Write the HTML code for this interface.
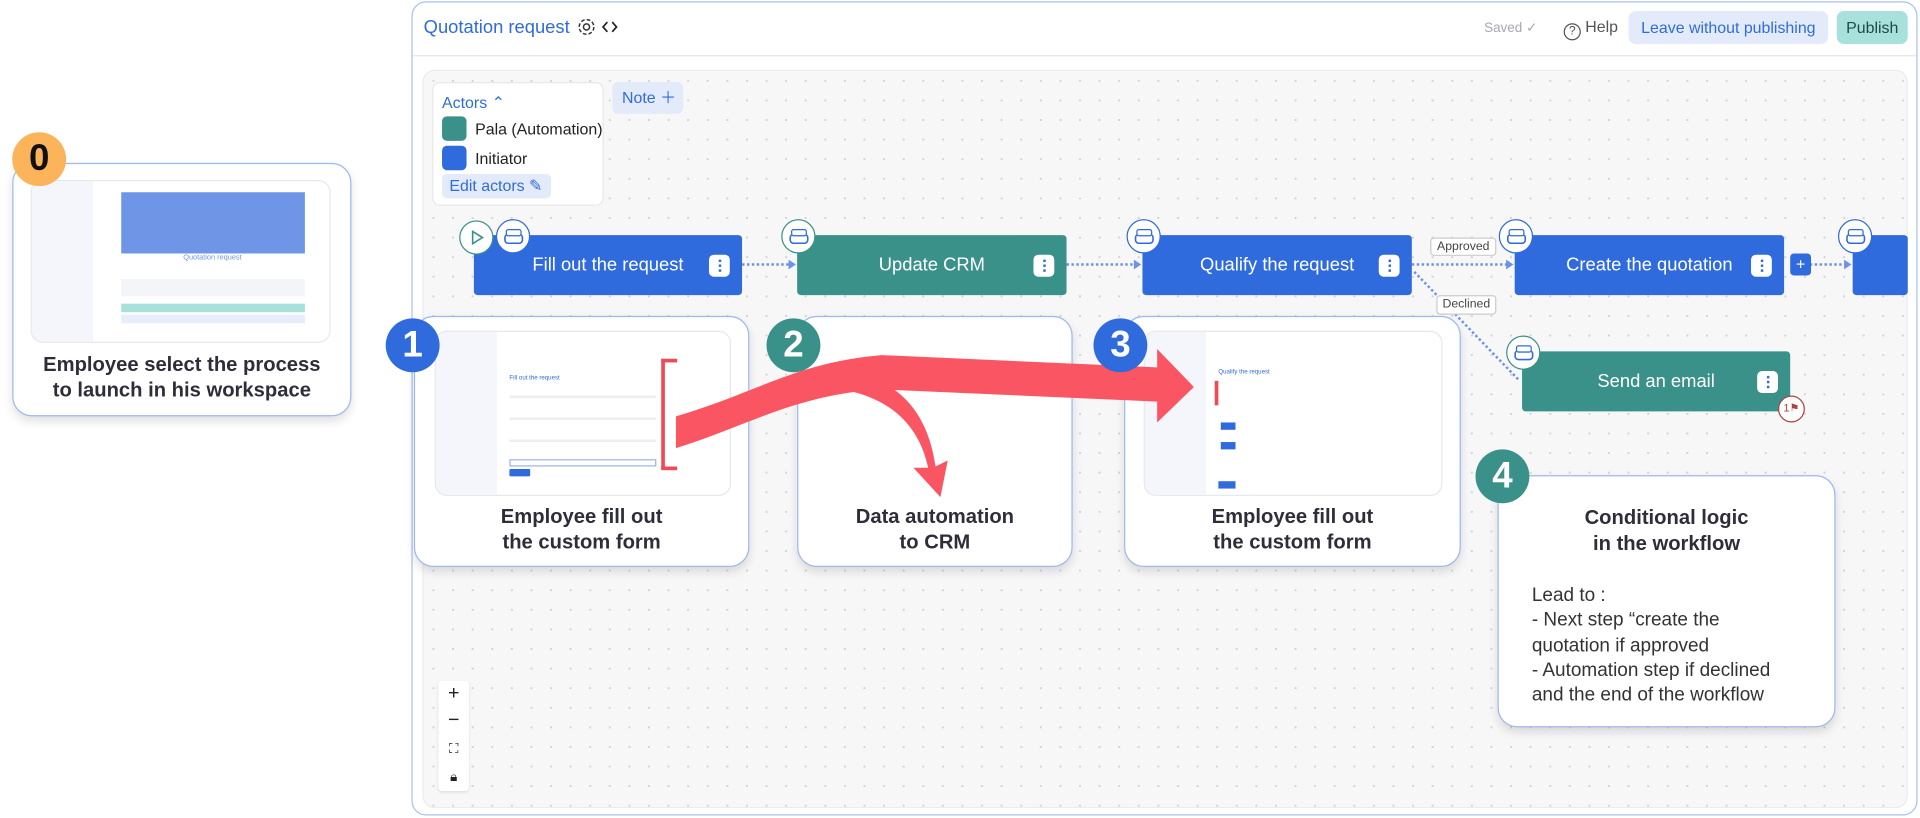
<!DOCTYPE html>
<html><head><meta charset="utf-8"><style>
*{box-sizing:border-box;margin:0;padding:0}
html,body{width:1920px;height:818px;overflow:hidden;background:#fff;font-family:"Liberation Sans",sans-serif}
#s{position:absolute;left:0;top:0;width:1568px;height:668px;transform:scale(1.22449);transform-origin:0 0}
.a{position:absolute}
.card{position:absolute;background:#fff;border:1.5px solid #9db8ef;border-radius:16px;box-shadow:0 4px 8px rgba(0,0,0,.12)}
.badge{position:absolute;width:44px;height:44px;border-radius:50%;color:#fff;font-weight:bold;font-size:30px;text-align:center;line-height:44px}
.ct{position:absolute;left:0;right:0;text-align:center;font-weight:bold;font-size:16.5px;color:#2e2e3a;line-height:21px}
.node{position:absolute;height:49px;border-radius:3px;color:#fff;font-size:15px;line-height:49px;text-align:center}
.kb{position:absolute;right:10px;top:16px;width:17px;height:18px;background:#fff;border-radius:4px}
.kb:before{content:"";position:absolute;left:7.5px;top:4px;width:2px;height:2px;background:#2f6bdc;box-shadow:0 4px #2f6bdc,0 8px #2f6bdc}
.ic{position:absolute;width:28px;height:28px;border-radius:50%;background:#fff;border:1.5px solid #2f6bdc}
.ic:before{content:"";position:absolute;left:7px;top:7px;width:11px;height:4px;border:1.3px solid #2f6bdc;border-radius:2px;box-shadow:0 5px 0 -0px #fff,0 5px 0 1.3px #2f6bdc}
.teal{background:#3a918a}.blue{background:#2f6bdc}
.shot{position:absolute;background:#fff;border:1px solid #e6e8ee;border-radius:10px;overflow:hidden}
.side{position:absolute;left:0;top:0;bottom:0;width:50px;background:#f4f6fb}
.ln{position:absolute;height:2px;background:#d6d9e2}
</style></head><body><div id="s">

<div class="card" style="left:10px;top:133px;width:277px;height:207px"></div>
<div class="shot" style="left:25px;top:147px;width:245px;height:133px">
 <div class="side" style="width:50px"></div>
 <div class="a" style="left:73px;top:9px;width:150px;height:50px;background:#6f95e6"></div>
 <div class="a" style="left:50px;top:60px;width:195px;text-align:center;color:#6f95e6;font-size:6px">Quotation request</div>
 <div class="a" style="left:73px;top:80px;width:150px;height:14px;background:#f4f5f8"></div>
 <div class="a" style="left:73px;top:100px;width:150px;height:7px;background:#a8e0dc"></div>
 <div class="a" style="left:73px;top:109px;width:150px;height:7px;background:#e6edfb"></div>
</div>
<div class="badge" style="left:10px;top:108px;background:#fbb45a;color:#111">0</div>
<div class="ct" style="left:10px;width:277px;top:288px">Employee select the process<br>to launch in his workspace</div>

<div class="a" style="left:336px;top:1px;width:1230px;height:665px;border:1.5px solid #a9c1f1;border-radius:12px;background:#fff"></div>
<div class="a" style="left:337px;top:45px;width:1228px;height:1px;background:#e4e6eb"></div>
<div class="a" style="left:345px;top:57px;width:1213px;height:603px;border-radius:10px;border:1px solid #ececec;background-color:#f7f7f8;background-image:radial-gradient(#cfd2d8 0.8px,transparent 1px);background-size:16px 16px"></div>
<div class="a" style="left:346px;top:14px;color:#2f6bdc;font-size:15px">Quotation request</div>
<svg class="a" style="left:471px;top:14px" width="36" height="16" viewBox="0 0 36 16"><circle cx="8" cy="8" r="2.5" fill="none" stroke="#333" stroke-width="1.2"/><circle cx="8" cy="8" r="6" fill="none" stroke="#333" stroke-width="1.2" stroke-dasharray="3 1.7"/><path d="M25 4l-3.5 4 3.5 4M29 4l3.5 4-3.5 4" fill="none" stroke="#222" stroke-width="1.4"/></svg>
<div class="a" style="left:1212px;top:16px;color:#a5a8b0;font-size:11px">Saved ✓</div>
<div class="a" style="left:1277px;top:14px;color:#555;font-size:13px"><span style="display:inline-block;width:14px;height:14px;border:1.2px solid #555;border-radius:50%;font-size:10px;text-align:center;line-height:12px;vertical-align:-2px">?</span> Help</div>
<div class="a" style="left:1330px;top:9px;width:163px;height:27px;background:#e3ebfb;border-radius:6px;color:#2f6bdc;font-size:13px;line-height:27px;text-align:center">Leave without publishing</div>
<div class="a" style="left:1500px;top:9px;width:58px;height:27px;background:#a8e0dc;border-radius:6px;color:#1c4b47;font-size:13px;line-height:27px;text-align:center">Publish</div>

<div class="a" style="left:353px;top:67px;width:140px;height:101px;background:#fff;border:1px solid #e8e8ea;border-radius:6px"></div>
<div class="a" style="left:361px;top:76px;color:#2f6bdc;font-size:13px">Actors ⌃</div>
<div class="a teal" style="left:361px;top:95px;width:20px;height:20px;border-radius:4px"></div>
<div class="a" style="left:388px;top:98px;font-size:13px;color:#222">Pala (Automation)</div>
<div class="a blue" style="left:361px;top:119px;width:20px;height:20px;border-radius:4px"></div>
<div class="a" style="left:388px;top:122px;font-size:13px;color:#222">Initiator</div>
<div class="a" style="left:361px;top:142px;width:89px;height:20px;background:#e3ebfb;border-radius:4px;color:#2f6bdc;font-size:13px;line-height:20px;padding-left:6px">Edit actors ✎</div>
<div class="a" style="left:500px;top:67px;width:58px;height:26px;background:#e3ebfb;border-radius:5px;color:#2f6bdc;font-size:13px;line-height:26px;padding-left:8px">Note ＋</div>

<svg class="a" style="left:0;top:0" width="1568" height="668"><g stroke="#6d93e5" stroke-width="2" stroke-dasharray="2 2" fill="none">
<path d="M606 216H648"/><path d="M871 216H930"/><path d="M1153 216H1234"/><path d="M1478 216H1510"/><path d="M1155 222L1241 311"/></g>
<g fill="#6d93e5"><path d="M644 212l6 4-6 4z"/><path d="M926 212l6 4-6 4z"/><path d="M1230 212l6 4-6 4z"/><path d="M1506 212l6 4-6 4z"/></g></svg>
<div class="a" style="left:1168px;top:194px;width:54px;height:15px;background:#fff;border:1px solid #ccc;border-radius:3px;font-size:10px;color:#444;text-align:center;line-height:13px">Approved</div>
<div class="a" style="left:1173px;top:241px;width:49px;height:16px;background:#fff;border:1px solid #ccc;border-radius:3px;font-size:10px;color:#444;text-align:center;line-height:14px">Declined</div>

<div class="node blue" style="left:387px;top:192px;width:219px">Fill out the request<div class="kb"></div></div>
<div class="node teal" style="left:651px;top:192px;width:220px">Update CRM<div class="kb"></div></div>
<div class="node blue" style="left:933px;top:192px;width:220px">Qualify the request<div class="kb"></div></div>
<div class="node blue" style="left:1237px;top:192px;width:220px">Create the quotation<div class="kb"></div></div>
<div class="node blue" style="left:1513px;top:192px;width:45px"></div>
<div class="node teal" style="left:1243px;top:287px;width:219px">Send an email<div class="kb"></div></div>
<div class="a blue" style="left:1462px;top:207px;width:17px;height:18px;border-radius:3px;color:#fff;font-size:13px;text-align:center;line-height:18px">+</div>
<div class="a" style="left:1452px;top:323px;width:22px;height:22px;border-radius:50%;background:#fff;border:1.5px solid #b0413e;color:#b0413e;font-size:9px;text-align:center;line-height:19px">1⚑</div>
<div class="a" style="left:375px;top:180px;width:28px;height:28px;border-radius:50%;background:#fff;border:1.5px solid #3a918a"><svg width="26" height="26"><path d="M10 8l8 5-8 5z" fill="none" stroke="#3a918a" stroke-width="1.3"/></svg></div>
<div class="ic" style="left:405px;top:179px"></div>
<div class="ic" style="left:638px;top:179px;border-color:#3a918a"></div>
<div class="ic" style="left:920px;top:179px"></div>
<div class="ic" style="left:1224px;top:179px"></div>
<div class="ic" style="left:1501px;top:179px"></div>
<div class="ic" style="left:1230px;top:274px;border-color:#3a918a"></div>

<div class="card" style="left:338px;top:258px;width:274px;height:205px"></div>
<div class="card" style="left:651px;top:258px;width:225px;height:205px"></div>
<div class="card" style="left:918px;top:258px;width:275px;height:205px"></div>
<div class="card" style="left:1223px;top:388px;width:276px;height:206px"></div>

<div class="shot" style="left:355px;top:270px;width:242px;height:135px"><div class="side"></div>
 <div class="a" style="left:60px;top:35px;color:#2f6bdc;font-size:5px">Fill out the request</div>
 <div class="ln" style="left:60px;top:52px;width:120px;background:#eee"></div><div class="ln" style="left:60px;top:70px;width:120px;background:#eee"></div>
 <div class="ln" style="left:60px;top:88px;width:120px;background:#eee"></div><div class="ln" style="left:60px;top:104px;width:120px;height:6px;border:1px solid #9bb4e8;background:#fff"></div>
 <div class="a blue" style="left:60px;top:112px;width:17px;height:6px;border-radius:1px"></div></div>
<div class="shot" style="left:934px;top:270px;width:244px;height:135px"><div class="side"></div>
 <div class="a" style="left:60px;top:30px;color:#2f6bdc;font-size:5px">Qualify the request</div>
 <div class="a" style="left:57px;top:40px;width:3px;height:20px;background:#f04a55"></div>
 <div class="a blue" style="left:62px;top:74px;width:12px;height:6px"></div><div class="a blue" style="left:62px;top:90px;width:12px;height:6px"></div>
 <div class="a blue" style="left:60px;top:122px;width:14px;height:6px"></div></div>
<div class="a" style="left:540px;top:293px;width:3px;height:90px;background:#f04a55"></div>
<div class="a" style="left:540px;top:293px;width:13px;height:3px;background:#f04a55"></div>
<div class="a" style="left:540px;top:381px;width:13px;height:3px;background:#f04a55"></div>

<svg class="a" style="left:0;top:0" width="1568" height="668"><g fill="#fa5563">
<path d="M552 340C620 320 650 296 720 290L945 300L945 285L975 316L945 345L945 328L720 318C650 322 610 348 552 366Z"/>
<path d="M688 318C725 325 750 345 758 382L746 382L768 406L774 376L764 381C758 338 735 312 700 306Z"/></g></svg>

<div class="badge blue" style="left:315px;top:260px">1</div>
<div class="badge teal" style="left:626px;top:260px">2</div>
<div class="badge blue" style="left:893px;top:260px">3</div>
<div class="badge teal" style="left:1205px;top:367px">4</div>

<div class="ct" style="left:338px;width:274px;top:412px">Employee fill out<br>the custom form</div>
<div class="ct" style="left:651px;width:225px;top:412px">Data automation<br>to CRM</div>
<div class="ct" style="left:918px;width:275px;top:412px">Employee fill out<br>the custom form</div>
<div class="ct" style="left:1223px;width:276px;top:413px">Conditional logic<br>in the workflow</div>
<div class="a" style="left:1251px;top:477px;font-size:15.5px;color:#333;line-height:20.3px">Lead to :<br>- Next step “create the<br>quotation if approved<br>- Automation step if declined<br>and the end of the workflow</div>

<div class="a" style="left:358px;top:556px;width:25px;height:90px;background:#fff;border-radius:3px;box-shadow:0 1px 2px rgba(0,0,0,.1);color:#222;font-size:16px;text-align:center;line-height:22px">+<br>−<br><span style="font-size:11px">⛶</span><br><span style="font-size:11px">🔒︎</span></div>
</div></body></html>
